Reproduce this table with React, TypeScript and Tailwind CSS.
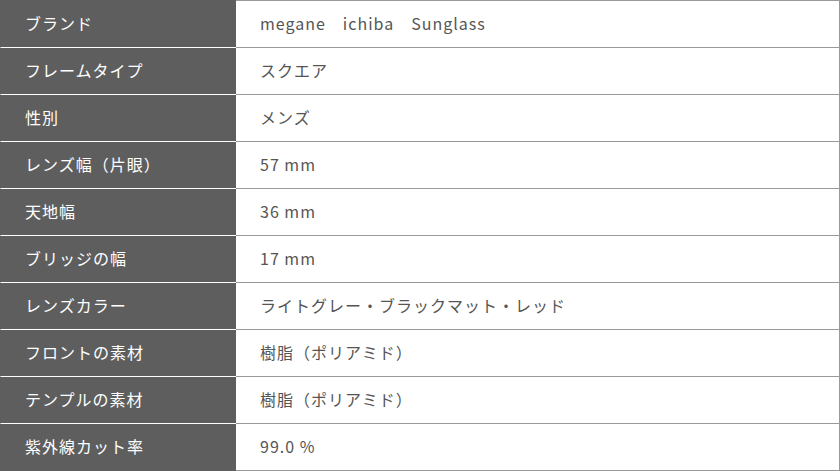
const specs: [string, string][] = [
  ["ブランド", "megane　ichiba　Sunglass"],
  ["フレームタイプ", "スクエア"],
  ["性別", "メンズ"],
  ["レンズ幅（片眼）", "57 mm"],
  ["天地幅", "36 mm"],
  ["ブリッジの幅", "17 mm"],
  ["レンズカラー", "ライトグレー・ブラックマット・レッド"],
  ["フロントの素材", "樹脂（ポリアミド）"],
  ["テンプルの素材", "樹脂（ポリアミド）"],
  ["紫外線カット率", "99.0 %"],
];

export default function App() {
  return (
    <div
      className="w-[840px] h-[471px] bg-white text-[16px] tracking-[1px]"
      style={{ fontFamily: '"Noto Sans CJK JP", "Noto Sans", sans-serif' }}
    >
      {/* spec table */}
      <div className="flex flex-col">
        {specs.map(([label, value], i) => {
          const first = i === 0;
          const last = i === specs.length - 1;
          return (
            <div key={label} className="flex">
              <div
                className={
                  "w-[236px] h-[47px] flex items-center pl-6 pb-[2px] bg-[#5e5e5e] text-white border-l border-[#5e5e5e] " +
                  (last ? "border-b border-b-[#5e5e5e] " : "border-b border-b-white ") +
                  (first ? "border-t border-t-[#5e5e5e] h-[48px]" : "")
                }
              >
                {label}
              </div>
              <div
                className={
                  "flex-1 h-[47px] flex items-center pl-6 pb-[2px] text-[#555555] border-b border-r border-[#999999] " +
                  (first ? "border-t h-[48px]" : "")
                }
              >
                {value}
              </div>
            </div>
          );
        })}
      </div>
    </div>
  );
}
